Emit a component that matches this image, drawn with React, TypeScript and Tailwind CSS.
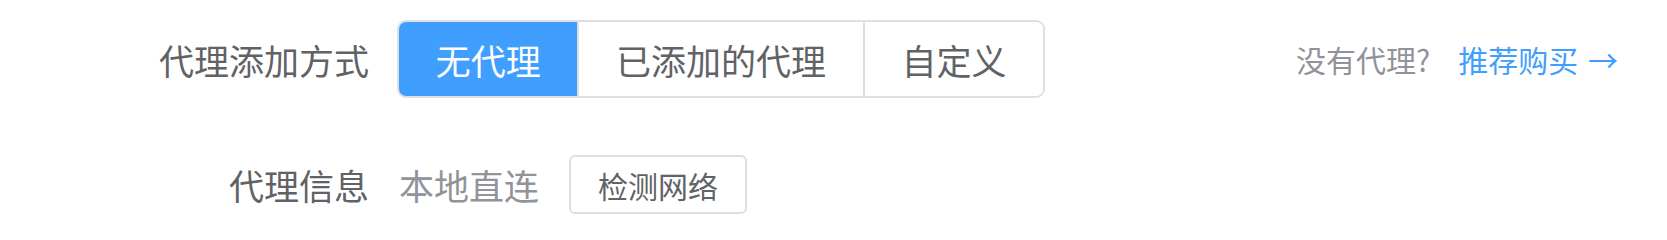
export default function App() {
  const modes = ["无代理", "已添加的代理", "自定义"];
  const active = 0;

  return (
    <div
      className="w-[1667px] h-[240px] pt-[20px] bg-white overflow-hidden"
      style={{ fontFamily: '"Noto Sans CJK SC", "Noto Sans", sans-serif' }}
    >
      <div className="flex items-center h-[78px] pr-[49px]">
        <div className="w-[397px] pr-[28px] text-right text-[35px] leading-none text-[#606266]">
          代理添加方式
        </div>
        <div className="flex h-[78px] border-2 border-[#dcdfe6] rounded-[9px] overflow-hidden">
          {modes.map((m, i) => (
            <button
              key={m}
              className={`h-full px-[36.7px] text-[35px] leading-none ${
                i > 0 ? "border-l-2 border-[#dcdfe6]" : ""
              } ${
                i === active
                  ? "bg-[#409eff] text-white"
                  : "bg-white text-[#606266]"
              }`}
            >
              {m}
            </button>
          ))}
        </div>
        <div className="ml-auto flex items-center text-[30px] leading-none">
          <span className="text-[#909399]">没有代理?</span>
          <a className="ml-[28px] text-[#409eff]">
            推荐购买 <span className="ml-[3px]">→</span>
          </a>
        </div>
      </div>

      <div className="flex items-center h-[59px] mt-[57px]">
        <div className="w-[397px] pr-[28px] text-right text-[35px] leading-none text-[#606266]">
          代理信息
        </div>
        <span className="ml-[2px] text-[35px] leading-none text-[#909399]">本地直连</span>
        <button className="ml-[30px] h-[59px] px-[27px] border-2 border-[#dcdfe6] rounded-[6px] bg-white text-[30px] leading-none text-[#606266]">
          检测网络
        </button>
      </div>
    </div>
  );
}
